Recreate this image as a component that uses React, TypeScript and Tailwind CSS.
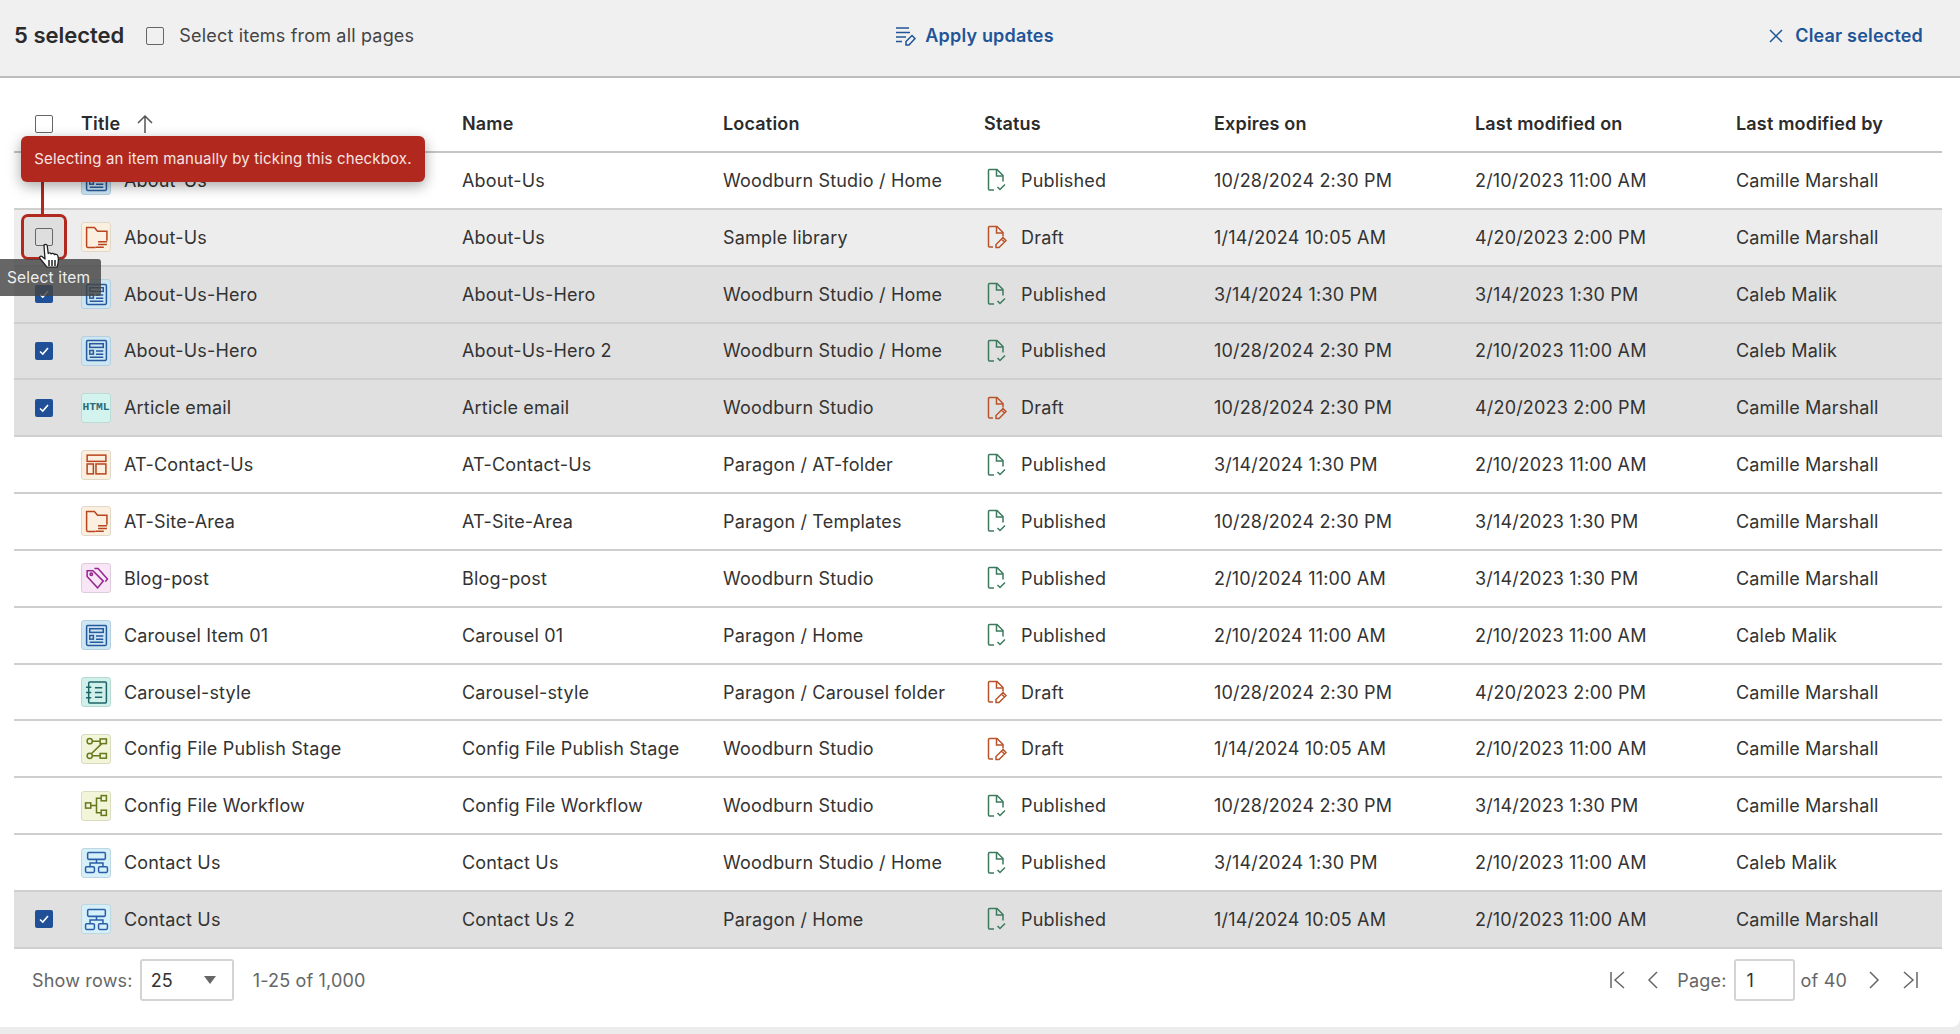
import { ReactNode } from "react"

type Tone = "form" | "folder" | "html" | "layout" | "tag" | "notes" | "flow" | "tree" | "org"

interface Row {
  title: string
  name: string
  location: string
  published: boolean
  expires: string
  modified: string
  by: string
  icon: Tone
  selected?: boolean
  hover?: boolean
}

const rows: Row[] = [
  { title: "About-Us", name: "About-Us", location: "Woodburn Studio / Home", published: true, expires: "10/28/2024 2:30 PM", modified: "2/10/2023 11:00 AM", by: "Camille Marshall", icon: "form" },
  { title: "About-Us", name: "About-Us", location: "Sample library", published: false, expires: "1/14/2024 10:05 AM", modified: "4/20/2023 2:00 PM", by: "Camille Marshall", icon: "folder", hover: true },
  { title: "About-Us-Hero", name: "About-Us-Hero", location: "Woodburn Studio / Home", published: true, expires: "3/14/2024 1:30 PM", modified: "3/14/2023 1:30 PM", by: "Caleb Malik", icon: "form", selected: true },
  { title: "About-Us-Hero", name: "About-Us-Hero 2", location: "Woodburn Studio / Home", published: true, expires: "10/28/2024 2:30 PM", modified: "2/10/2023 11:00 AM", by: "Caleb Malik", icon: "form", selected: true },
  { title: "Article email", name: "Article email", location: "Woodburn Studio", published: false, expires: "10/28/2024 2:30 PM", modified: "4/20/2023 2:00 PM", by: "Camille Marshall", icon: "html", selected: true },
  { title: "AT-Contact-Us", name: "AT-Contact-Us", location: "Paragon / AT-folder", published: true, expires: "3/14/2024 1:30 PM", modified: "2/10/2023 11:00 AM", by: "Camille Marshall", icon: "layout" },
  { title: "AT-Site-Area", name: "AT-Site-Area", location: "Paragon / Templates", published: true, expires: "10/28/2024 2:30 PM", modified: "3/14/2023 1:30 PM", by: "Camille Marshall", icon: "folder" },
  { title: "Blog-post", name: "Blog-post", location: "Woodburn Studio", published: true, expires: "2/10/2024 11:00 AM", modified: "3/14/2023 1:30 PM", by: "Camille Marshall", icon: "tag" },
  { title: "Carousel Item 01", name: "Carousel 01", location: "Paragon / Home", published: true, expires: "2/10/2024 11:00 AM", modified: "2/10/2023 11:00 AM", by: "Caleb Malik", icon: "form" },
  { title: "Carousel-style", name: "Carousel-style", location: "Paragon / Carousel folder", published: false, expires: "10/28/2024 2:30 PM", modified: "4/20/2023 2:00 PM", by: "Camille Marshall", icon: "notes" },
  { title: "Config File Publish Stage", name: "Config File Publish Stage", location: "Woodburn Studio", published: false, expires: "1/14/2024 10:05 AM", modified: "2/10/2023 11:00 AM", by: "Camille Marshall", icon: "flow" },
  { title: "Config File Workflow", name: "Config File Workflow", location: "Woodburn Studio", published: true, expires: "10/28/2024 2:30 PM", modified: "3/14/2023 1:30 PM", by: "Camille Marshall", icon: "tree" },
  { title: "Contact Us", name: "Contact Us", location: "Woodburn Studio / Home", published: true, expires: "3/14/2024 1:30 PM", modified: "2/10/2023 11:00 AM", by: "Caleb Malik", icon: "org" },
  { title: "Contact Us", name: "Contact Us 2", location: "Paragon / Home", published: true, expires: "1/14/2024 10:05 AM", modified: "2/10/2023 11:00 AM", by: "Camille Marshall", icon: "org", selected: true },
]

const cols = "grid grid-cols-[67px_380px_261px_261px_230px_261px_261px_207px] items-center"

function Checkbox({ checked }: { checked?: boolean }) {
  if (checked) {
    return (
      <span className="flex h-[18px] w-[18px] items-center justify-center rounded-[2px] bg-[#1f4f96]">
        <svg width="12" height="12" viewBox="0 0 12 12" fill="none" stroke="#fff" strokeWidth="1.6">
          <path d="M2 6.5 4.8 9 10 3" />
        </svg>
      </span>
    )
  }
  return <span className="block h-[18px] w-[18px] rounded-[2px] border-[1.5px] border-[#666]" />
}

const tileStyles: Record<Tone, string> = {
  form: "bg-[#cde6f4] border-[#b4d0df] text-[#275a9c]",
  folder: "bg-[#fbf0df] border-[#e2d8c8] text-[#b8451f]",
  html: "bg-[#d3f3ee] border-[#b9dcd7] text-[#2a6b78]",
  layout: "bg-[#fbf0df] border-[#e2d8c8] text-[#b8451f]",
  tag: "bg-[#f8e6f7] border-[#ddcbdc] text-[#93278f]",
  notes: "bg-[#cff1ea] border-[#b6d9d2] text-[#1f6268]",
  flow: "bg-[#f2f5d8] border-[#d9dcc0] text-[#66791f]",
  tree: "bg-[#f2f5d8] border-[#d9dcc0] text-[#66791f]",
  org: "bg-[#d6f0fa] border-[#bcd7e2] text-[#2a5fa8]",
}

function Glyph({ tone }: { tone: Tone }) {
  switch (tone) {
    case "form":
      return (
        <>
          <rect x="2.5" y="2.5" width="19" height="19" rx="1" />
          <rect x="5.5" y="5.5" width="13" height="3.5" />
          <rect x="5.5" y="12" width="3.5" height="3.5" />
          <path d="M11.5 12.5h7M11.5 15.5h7M5.5 18.5h13" />
        </>
      )
    case "folder":
      return (
        <>
          <path d="M11 21.5H3.500a1 1 0 0 1-1-1v-18h7.500l3 3.500h9v9" />
          <path d="M13.500 16h8.500M13.500 18.700h8.500M11 21.400h8" />
        </>
      )
    case "layout":
      return (
        <>
          <rect x="3" y="3" width="18" height="6" />
          <rect x="3" y="11.500" width="6" height="9.500" />
          <rect x="11.500" y="11.500" width="9.500" height="9.500" />
        </>
      )
    case "tag":
      return (
        <>
          <path d="M3 10V4.500h5.500l10 10-5.500 6.500z" />
          <path d="M10 2.500h3.500l9 10-2 2.500" />
          <circle cx="7" cy="8" r="1.200" />
        </>
      )
    case "notes":
      return (
        <>
          <rect x="4.500" y="2" width="17" height="20" rx="1" />
          <path d="M2 7h5M2 12h5M2 17h5M10.500 7.500h7M10.500 12h7M10.500 16.500h7" />
        </>
      )
    case "flow":
      return (
        <>
          <circle cx="5.500" cy="5" r="2.500" />
          <rect x="15.500" y="2.800" width="6" height="4.500" />
          <circle cx="5.500" cy="19" r="2.500" />
          <rect x="15.500" y="16.800" width="6" height="4.500" />
          <path d="M8 5h7.500M8 19h7.500M17 7.300 7 17" />
        </>
      )
    case "tree":
      return (
        <>
          <rect x="1.500" y="9.500" width="5" height="5" />
          <rect x="16.500" y="2.500" width="5" height="5" />
          <rect x="16.500" y="16.500" width="5" height="5" />
          <path d="M6.500 12h5.500M16.500 5H12v14h4.500" />
        </>
      )
    case "org":
      return (
        <>
          <rect x="3.500" y="2.500" width="17" height="6.500" rx="1" />
          <rect x="1.500" y="16" width="8.500" height="5.500" rx="1" />
          <rect x="14" y="16" width="8.500" height="5.500" rx="1" />
          <path d="M12 9v3.500M5.800 16v-3.500h12.400V16" />
        </>
      )
    default:
      return null
  }
}

function Tile({ tone }: { tone: Tone }) {
  return (
    <span className={`flex h-[30px] w-[30px] shrink-0 items-center justify-center rounded-[3px] border ${tileStyles[tone]}`}>
      {tone === "html" ? (
        <span className="font-['Liberation_Mono',monospace] text-[11.300px] leading-none font-bold tracking-normal">HTML</span>
      ) : (
        <svg width="25" height="25" viewBox="0 0 24 24" fill="none" stroke="currentColor" strokeWidth="1.450">
          <Glyph tone={tone} />
        </svg>
      )}
    </span>
  )
}

function StatusIcon({ published }: { published: boolean }) {
  return (
    <svg width="22" height="24" viewBox="0 0 22 24" fill="none" strokeWidth="1.500" stroke={published ? "#3c7a5e" : "#b9532a"}>
      <path d={published ? "M8 22H3.500a1 1 0 0 1-1-1V2.500a1 1 0 0 1 1-1h7.500l6 6v6" : "M7 22H3.500a1 1 0 0 1-1-1V2.500a1 1 0 0 1 1-1h7.500l6 6v4"} />
      <path d="M10.500 1.500v6.500h6.500" />
      {published ? (
        <path d="M11.500 19l2.500 2.500 5-5" />
      ) : (
        <path d="M10 22.500v-3l7-7 3 3-7 7zM15.500 14l3 3" />
      )}
    </svg>
  )
}

function HeaderCell({ children }: { children: ReactNode }) {
  return <div className="text-[18px] font-semibold text-[#2b2b2b]">{children}</div>
}

function TableRow({ row }: { row: Row }) {
  const bg = row.selected ? "bg-[#e0e0e0]" : row.hover ? "bg-[#ededed]" : "bg-white"
  const showBox = row.selected || row.hover
  return (
    <div className={`${cols} h-[56.850px] border-b-2 border-[#cfcfcf] text-[18px] text-[#333] ${bg}`}>
      <div className="flex justify-center pr-[7px]">
        {showBox ? <Checkbox checked={row.selected} /> : null}
      </div>
      <div className="flex items-center gap-[13px]">
        <Tile tone={row.icon} />
        <span>{row.title}</span>
      </div>
      <div className="pl-[1px]">{row.name}</div>
      <div className="pl-[1px]">{row.location}</div>
      <div className="flex items-center gap-[13px] pl-[3px]">
        <StatusIcon published={row.published} />
        <span>{row.published ? "Published" : "Draft"}</span>
      </div>
      <div className="pl-[1px]">{row.expires}</div>
      <div className="pl-[1px]">{row.modified}</div>
      <div className="pl-[1px] whitespace-nowrap">{row.by}</div>
    </div>
  )
}

function PagerIcon({ d }: { d: string }) {
  return (
    <svg width="18" height="20" viewBox="0 0 18 20" fill="none" stroke="#666" strokeWidth="1.500">
      <path d={d} />
    </svg>
  )
}

export default function App() {
  return (
    <div className="relative h-[1034px] w-[1960px] overflow-hidden bg-[#ececec] font-['Inter',sans-serif] tracking-[0.18px]">
      <div className="rounded-br-[8px] bg-white">
        <div className="flex h-[78px] items-center justify-between border-b-2 border-[#bdbdbd] bg-[#f0f0f0] pr-[37px] pb-[5px] pl-[14px]">
          <div className="flex w-[620px] items-center">
            <span className="text-[22px] font-semibold tracking-normal text-[#2b2b2b]">5 selected</span>
            <span className="mr-[15px] ml-[22px]"><Checkbox /></span>
            <span className="text-[18px] text-[#444]">Select items from all pages</span>
          </div>
          <div className="ml-[12px] flex items-center gap-[8px] text-[18px] font-semibold text-[#1f5597]">
            <svg width="22" height="20" viewBox="0 0 22 20" fill="none" stroke="currentColor" strokeWidth="1.500">
              <path d="M1 2h13M1 6.500h14M1 11h10M1 15.500h6" />
              <path d="M11 19v-3.500l6-6 3 3-6 6.500z" />
            </svg>
            <span>Apply updates</span>
          </div>
          <div className="flex w-[620px] items-center justify-end gap-[12px] text-[18px] font-semibold text-[#1f5597]">
            <svg width="14" height="14" viewBox="0 0 14 14" fill="none" stroke="currentColor" strokeWidth="1.500">
              <path d="M1 1l12 12M13 1 1 13" />
            </svg>
            <span>Clear selected</span>
          </div>
        </div>

        <div className="pr-[18px] pl-[14px]">
          <div className={`${cols} h-[75px] border-b-2 border-[#c4c4c4] pt-[18px]`}>
            <div className="flex justify-center pr-[7px]"><Checkbox /></div>
            <HeaderCell>
              <span className="flex items-center gap-[17px]">
                Title
                <svg width="16" height="18" viewBox="0 0 16 18" fill="none" stroke="#555" strokeWidth="1.500">
                  <path d="M8 18V1M1 8l7-7 7 7" />
                </svg>
              </span>
            </HeaderCell>
            <HeaderCell><span className="pl-[1px]">Name</span></HeaderCell>
            <HeaderCell><span className="pl-[1px]">Location</span></HeaderCell>
            <HeaderCell><span className="pl-[1px]">Status</span></HeaderCell>
            <HeaderCell><span className="pl-[1px]">Expires on</span></HeaderCell>
            <HeaderCell><span className="pl-[1px]">Last modified on</span></HeaderCell>
            <HeaderCell><span className="pl-[1px]">Last modified by</span></HeaderCell>
          </div>
          {rows.map((row, i) => (
            <TableRow key={i} row={row} />
          ))}
        </div>

        <div className="flex h-[78px] items-center justify-between pr-[41px] pb-[15px] pl-[32px] text-[18px] text-[#666]">
          <div className="flex items-center">
            <span>Show rows:</span>
            <div className="mr-[19px] ml-[7px] flex h-[42px] w-[94px] items-center justify-between rounded-[3px] border-2 border-[#d4d4d4] pr-[16px] pl-[9px] text-[#333]">
              <span>25</span>
              <span className="h-0 w-0 border-x-[6px] border-t-[8px] border-x-transparent border-t-[#666]" />
            </div>
            <span>1-25 of 1,000</span>
          </div>
          <div className="flex items-center">
            <PagerIcon d="M2 2v16M15 2 6 10l9 8" />
            <span className="ml-[17px]"><PagerIcon d="M13 2 5 10l8 8" /></span>
            <span className="mr-[7px] ml-[15px]">Page:</span>
            <div className="flex h-[42px] w-[61px] items-center rounded-[3px] border-2 border-[#d4d4d4] pl-[11px] text-[#333]">1</div>
            <span className="ml-[6px]">of 40</span>
            <span className="ml-[18px]"><PagerIcon d="M5 2l8 8-8 8" /></span>
            <span className="ml-[18px]"><PagerIcon d="M3 2l9 8-9 8M16 2v16" /></span>
          </div>
        </div>
      </div>

      {/* callout over the second row */}
      <div className="absolute top-[182px] left-[41px] h-[34px] w-[3px] bg-[#b0281e]" />
      <div className="absolute top-[214px] left-[21px] flex h-[46px] w-[46px] items-center justify-center rounded-[7px] border-[3px] border-[#b0281e] bg-[#dedede]">
        <Checkbox />
      </div>
      <div className="absolute top-[136px] left-[21px] flex h-[46px] w-[404px] items-center justify-center rounded-[6px] bg-[#b0281e] pt-[1px] text-[15px] tracking-[0.15px] whitespace-nowrap text-[#f7e4e2] shadow-[0_4px_14px_rgba(0,0,0,0.35)]">
        Selecting an item manually by ticking this checkbox.
      </div>
      <div className="absolute top-[259px] left-0 flex h-[37px] w-[101px] items-center rounded-r-[3px] bg-[rgba(68,68,68,0.82)] pl-[7px] text-[15.500px] whitespace-nowrap text-[#eee]">
        Select item
      </div>
      <svg className="absolute top-[243px] left-[38px]" width="26" height="26" viewBox="0 0 26 26" fill="#fff" stroke="#222" strokeWidth="1.300" strokeLinejoin="round">
        <path d="M6 2.500c0-1.500 3-1.500 3.200 0l1 8c.5-1 2.500-1 3 .5.700-1 2.800-.8 3.200.7.800-.8 3-.6 3.400 1 1 3 .7 7-.8 11.500H9L2 15.500c-1-1.500.5-3 2-2l3 2.500z" />
        <path d="M11 17v6M14 17v6M17 17v6" fill="none" strokeWidth="1.500" />
      </svg>
    </div>
  )
}
